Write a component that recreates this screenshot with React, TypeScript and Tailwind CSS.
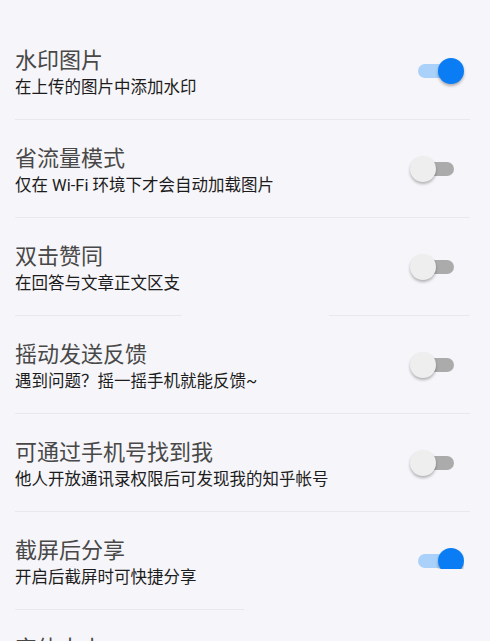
import React from "react";

type Item = {
  title: string;
  desc: string;
  on: boolean;
};

const items: Item[] = [
  { title: "水印图片", desc: "在上传的图片中添加水印", on: true },
  { title: "省流量模式", desc: "仅在 Wi-Fi 环境下才会自动加载图片", on: false },
  { title: "双击赞同", desc: "在回答与文章正文区支持双击赞同", on: false },
  { title: "摇动发送反馈", desc: "遇到问题？摇一摇手机就能反馈~", on: false },
  { title: "可通过手机号找到我", desc: "他人开放通讯录权限后可发现我的知乎帐号", on: false },
  { title: "截屏后分享", desc: "开启后截屏时可快捷分享", on: true },
];

function Toggle({ on }: { on: boolean }) {
  return (
    <div className="relative w-[54px] h-[26px] shrink-0">
      <div
        className={
          on
            ? "absolute left-[8px] top-[6px] w-[36px] h-[14px] rounded-full bg-[#a9d1fa]"
            : "absolute left-[8px] top-[6px] w-[36px] h-[14px] rounded-full bg-[#ababab]"
        }
      />
      <div
        className={
          on
            ? "absolute left-[28px] top-0 w-[26px] h-[26px] rounded-full bg-[#0a7df4] shadow-[0_2px_3px_rgba(0,0,0,0.3)]"
            : "absolute left-0 top-0 w-[26px] h-[26px] rounded-full bg-[#eeeeef] shadow-[0_2px_3px_rgba(0,0,0,0.28)]"
        }
      />
    </div>
  );
}

function Row({ item, index }: { item: Item; index: number }) {
  // 第三行的说明文字被截断，第六行的开关被裁切（与截图一致）
  const cutDesc = index === 2;
  const clipToggle = index === 5;
  return (
    <div className="h-[97px] flex items-start justify-between px-[15px]">
      <div className="pt-[24px] flex flex-col gap-[2px] min-w-0">
        <div className="text-[22px] leading-[29px] text-[#484848] whitespace-nowrap">{item.title}</div>
        <div
          className={
            cutDesc
              ? "text-[16.5px] leading-[21px] text-[#1c1c1c] whitespace-nowrap overflow-hidden w-[165px]"
              : "text-[16.5px] leading-[21px] text-[#1c1c1c] whitespace-nowrap"
          }
        >
          {item.desc}
        </div>
      </div>
      <div className="self-stretch flex items-center mr-[11px]">
        {clipToggle ? (
          <div className="h-[26px]">
            <div className="h-[21px] overflow-hidden">
              <Toggle on={item.on} />
            </div>
          </div>
        ) : (
          <Toggle on={item.on} />
        )}
      </div>
    </div>
  );
}

function Divider({ index }: { index: number }) {
  if (index === 2) {
    return (
      <div className="flex px-[15px] h-px">
        <div className="w-[167px] bg-[#e9e8ec]" />
        <div className="w-[147px]" />
        <div className="flex-1 mr-[5px] bg-[#e9e8ec]" />
      </div>
    );
  }
  if (index === 5) {
    return (
      <div className="px-[15px] h-px">
        <div className="w-[229px] h-px bg-[#e9e8ec]" />
      </div>
    );
  }
  return <div className="mx-[15px] mr-[20px] h-px bg-[#e9e8ec]" />;
}

export default function App() {
  return (
    <div
      className="w-[490px] h-[641px] overflow-hidden bg-[#f6f5f9] pt-[22px]"
      style={{ fontFamily: "Roboto, 'Noto Sans CJK SC', sans-serif" }}
    >
      {items.map((item, i) => (
        <div key={item.title}>
          <Row item={item} index={i} />
          <Divider index={i} />
        </div>
      ))}
      <div className="px-[15px] pt-[24px]">
        <div className="text-[22px] leading-[29px] text-[#484848]">字体大小</div>
      </div>
    </div>
  );
}
